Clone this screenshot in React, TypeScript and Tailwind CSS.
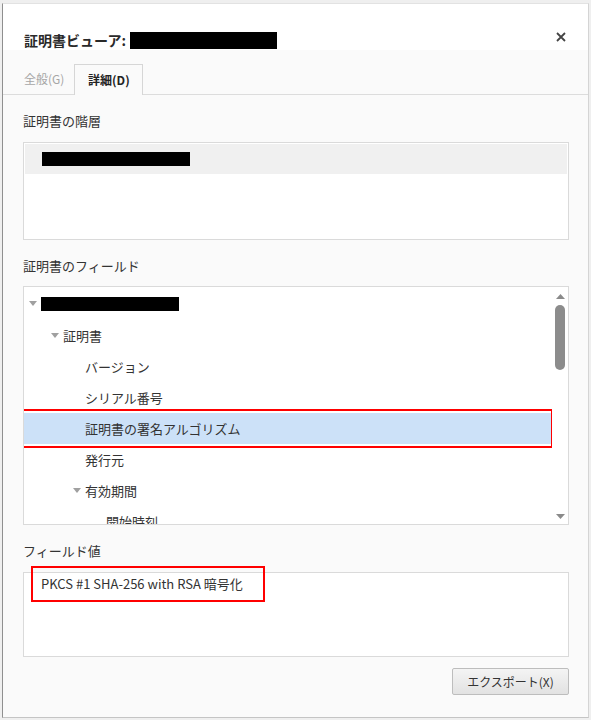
import React from 'react';

// tree rows of the certificate field list; pad = left padding inside the list
const FIELDS: { label?: string; redacted?: boolean; pad: number; toggle?: boolean; selected?: boolean }[] = [
  { redacted: true, pad: 5, toggle: true },
  { label: '証明書', pad: 27, toggle: true },
  { label: 'バージョン', pad: 61 },
  { label: 'シリアル番号', pad: 61 },
  { label: '証明書の署名アルゴリズム', pad: 61, selected: true },
  { label: '発行元', pad: 61 },
  { label: '有効期間', pad: 49, toggle: true },
  { label: '開始時刻', pad: 82 },
];

function Caret() {
  return (
    <svg width="8" height="5" viewBox="0 0 8 5" className="mr-[4px] shrink-0">
      <path d="M0 0 L8 0 L4 5 Z" fill="#a0a0a0" />
    </svg>
  );
}

export default function App() {
  return (
    <div
      className="w-[591px] h-[720px] bg-[#efefef] pl-[2px] pt-[3px] pr-[2px] pb-[2px]"
      style={{ fontFamily: '"Noto Sans CJK JP", "Noto Sans", sans-serif' }}
    >
      <div className="flex h-full flex-col border-l border-l-[#8f8f8f] border-t border-t-[#e2e2e2] border-r border-r-[#d4d4d4] border-b border-b-[#c4c4c4] bg-[#fafafa] text-[#333]">
        {/* header */}
        <div className="flex h-[46px] shrink-0 items-end justify-between bg-white pl-[21px] pr-[22px] pb-[1px]">
          <div className="flex items-center">
            <span className="text-[14px] font-semibold leading-[18px] text-[#2a2a2a]">証明書ビューア:</span>
            <span className="ml-[4px] inline-block h-[17px] w-[147px] bg-black" />
          </div>
          <svg width="10" height="10" viewBox="0 0 10 10" className="mb-[7px]">
            <path d="M1 1 L9 9 M9 1 L1 9" stroke="#444" strokeWidth="1.8" />
          </svg>
        </div>

        {/* tabs */}
        <div className="flex h-[45px] shrink-0 items-end border-b border-[#dcdcdc] pl-[21px]">
          <div className="flex h-[30px] items-center pr-[10px] text-[12px] text-[#a6a6a6]">全般(G)</div>
          <div className="-mb-px flex h-[31px] w-[69px] items-center justify-center border border-b-0 border-[#d6d6d6] bg-[#fafafa] text-[12px] font-bold text-[#222]">
            詳細(D)
          </div>
        </div>

        <div className="flex flex-1 flex-col pl-[20px] pr-[19px]">
          <div className="mt-[17px] text-[13px] leading-[18px]">証明書の階層</div>
          <div className="mt-[12px] h-[98px] border border-[#dadada] bg-white p-px">
            <div className="flex h-[30px] items-center bg-[#f0f0f0] pl-[17px]">
              <span className="inline-block h-[14px] w-[148px] bg-black" />
            </div>
          </div>

          <div className="mt-[17px] text-[13px] leading-[18px]">証明書のフィールド</div>
          <div className="relative mt-[11px] flex h-[239px] border border-[#dadada] bg-white">
            <div className="flex-1 overflow-hidden">
              {FIELDS.map((f, i) => (
                <div
                  key={i}
                  className={`relative flex items-center text-[13px] ${i === 0 ? 'h-[33px]' : 'h-[31px]'} ${f.selected ? 'bg-[#cce1f8]' : ''}`}
                  style={{ paddingLeft: f.pad }}
                >
                  {f.toggle && <Caret />}
                  {f.redacted ? (
                    <span className="inline-block h-[14px] w-[138px] bg-black" />
                  ) : (
                    <span className="whitespace-nowrap">{f.label}</span>
                  )}
                  {f.selected && (
                    <span className="pointer-events-none absolute -left-[2px] -right-px -top-[4px] -bottom-[4px] border-2 border-[#ff0000]" />
                  )}
                </div>
              ))}
            </div>
            {/* scrollbar */}
            <div className="flex w-[16px] shrink-0 flex-col items-center bg-white pt-[7px] pb-[5px]">
              <svg width="9" height="5" viewBox="0 0 9 5">
                <path d="M0 5 L9 5 L4.5 0 Z" fill="#8a8a8a" />
              </svg>
              <div className="mt-[6px] h-[65px] w-[10px] rounded-[5px] bg-[#8c8c8c]" />
              <div className="flex-1" />
              <svg width="9" height="5" viewBox="0 0 9 5">
                <path d="M0 0 L9 0 L4.5 5 Z" fill="#8a8a8a" />
              </svg>
            </div>
          </div>

          <div className="mt-[17px] text-[13px] leading-[18px]">フィールド値</div>
          <div className="mt-[12px] flex h-[85px] items-start border border-[#dadada] bg-white pl-[17px] pt-[2px]">
            <span className="relative block text-[13px] leading-[18px]">
              PKCS #1 SHA-256 with RSA 暗号化
              <span className="pointer-events-none absolute -left-[10px] -right-[22px] -top-[9px] -bottom-[9px] border-2 border-[#ff0000]" />
            </span>
          </div>

          <div className="mt-[11px] flex justify-end">
            <button className="h-[27px] w-[117px] rounded-[2px] border border-[#bdbdbd] bg-gradient-to-b from-[#f4f4f4] to-[#e2e2e2] text-[12px] text-[#333]">
              エクスポート(X)
            </button>
          </div>
        </div>
      </div>
    </div>
  );
}
